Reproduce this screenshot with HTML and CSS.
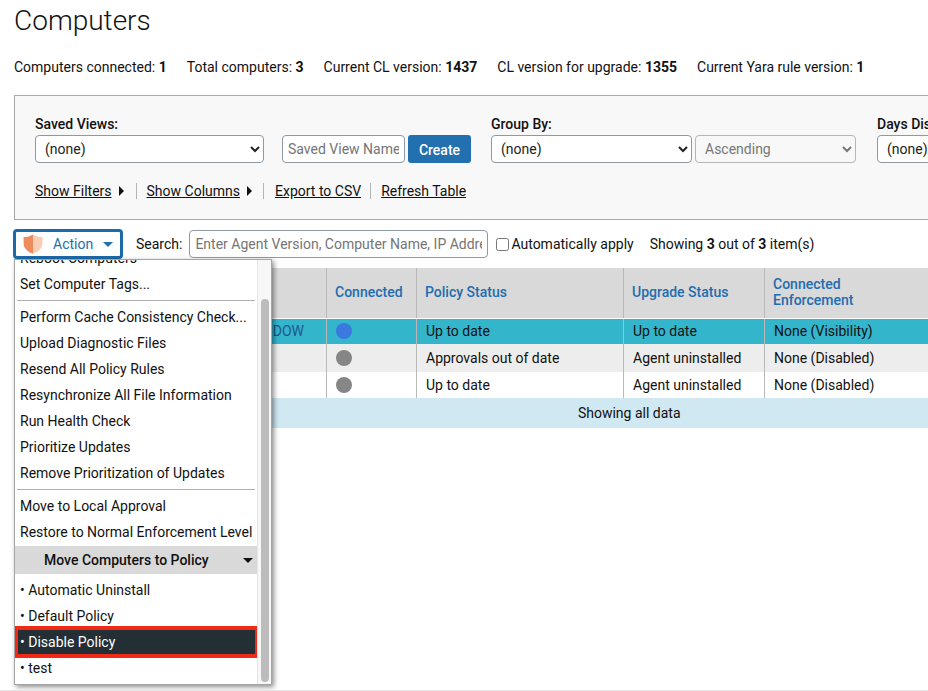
FILE: index.html
```html
<!DOCTYPE html>
<html lang="en">
<head>
<meta charset="utf-8">
<title>Computers</title>
<link rel="stylesheet" href="styles.css">
</head>
<body>
<div class="page">
  <h1 class="title">Computers</h1>
  <div class="stats">
    <span>Computers connected: <b>1</b></span>
    <span>Total computers: <b>3</b></span>
    <span>Current CL version: <b>1437</b></span>
    <span>CL version for upgrade: <b>1355</b></span>
    <span>Current Yara rule version: <b>1</b></span>
  </div>
  <section class="panel">
    <div class="fields">
      <div class="field">
        <label class="lbl">Saved Views:</label>
        <select class="ctl w-saved"><option>(none)</option></select>
      </div>
      <div class="field save-name">
        <div class="inline">
          <input class="ctl w-name" placeholder="Saved View Name">
          <button class="create">Create</button>
        </div>
      </div>
      <div class="field group-by">
        <label class="lbl">Group By:</label>
        <div class="inline">
          <select class="ctl w-group"><option>(none)</option></select>
          <select class="ctl w-order" disabled><option>Ascending</option></select>
        </div>
      </div>
      <div class="field days">
        <label class="lbl">Days Displayed:</label>
        <select class="ctl w-days"><option>(none)</option></select>
      </div>
    </div>
    <div class="links">
      <a>Show Filters</a><i class="tri"></i><span class="sep"></span>
      <a>Show Columns</a><i class="tri tri-b"></i><span class="sep sep-b"></span>
      <a>Export to CSV</a><span class="sep sep-c"></span>
      <a>Refresh Table</a>
    </div>
  </section>
  <div class="toolbar">
    <button class="action">
      <svg class="shield" viewBox="0 0 20 20" width="20" height="20" aria-hidden="true">
        <path d="M10 .4 C7.5 2 4 3 .6 3 V9.5 C.6 14.5 5 18 10 19.8 Z" fill="#ef8c5b"/>
        <path d="M10 .4 C12.5 2 16 3 19.4 3 V9.5 C19.4 14.5 15 18 10 19.8 Z" fill="#f9cdb6"/>
      </svg>
      <span>Action</span>
      <i class="caret"></i>
    </button>
    <label class="search-lbl">Search:</label>
    <input class="ctl w-search" placeholder="Enter Agent Version, Computer Name, IP Address">
    <label class="auto"><input type="checkbox" class="chk">Automatically apply</label>
    <span class="showing">Showing <b>3</b> out of <b>3</b> item(s)</span>
  </div>
  <table class="grid">
    <colgroup>
      <col class="c1"><col class="c2"><col class="c3"><col class="c4"><col class="c5"><col>
    </colgroup>
    <thead>
      <tr><th></th><th>Connected</th><th>Policy Status</th><th>Upgrade Status</th><th>Connected<br>Enforcement</th><th></th></tr>
    </thead>
    <tbody>
      <tr class="sel"><td class="name">WINDOW</td><td><i class="dot on"></i></td><td>Up to date</td><td>Up to date</td><td>None (Visibility)</td><td></td></tr>
      <tr class="alt"><td></td><td><i class="dot"></i></td><td>Approvals out of date</td><td>Agent uninstalled</td><td>None (Disabled)</td><td></td></tr>
      <tr class="plain"><td></td><td><i class="dot"></i></td><td>Up to date</td><td>Agent uninstalled</td><td>None (Disabled)</td><td></td></tr>
    </tbody>
    <tfoot>
      <tr><td colspan="6">Showing all data</td></tr>
    </tfoot>
  </table>
  <div class="menu">
    <div class="menu-list">
      <div class="item clipped">Reboot Computers</div>
      <div class="item">Set Computer Tags...</div>
      <hr>
      <div class="item">Perform Cache Consistency Check...</div>
      <div class="item">Upload Diagnostic Files</div>
      <div class="item">Resend All Policy Rules</div>
      <div class="item">Resynchronize All File Information</div>
      <div class="item">Run Health Check</div>
      <div class="item">Prioritize Updates</div>
      <div class="item">Remove Prioritization of Updates</div>
      <hr>
      <div class="item">Move to Local Approval</div>
      <div class="item">Restore to Normal Enforcement Level</div>
      <div class="sub-head"><span>Move Computers to Policy</span><i class="sub-caret"></i></div>
      <div class="sub-list">
        <div class="item">• Automatic Uninstall</div>
        <div class="item">• Default Policy</div>
        <div class="item picked">• Disable Policy</div>
        <div class="item">• test</div>
      </div>
    </div>
    <div class="scroll"><div class="thumb"></div></div>
  </div>
</div>
<div class="bottom-line"></div>
</body>
</html>
```
FILE: styles.css
```css
* { box-sizing: border-box; }
html, body { margin: 0; height: 691px; overflow: hidden; background: #fff; }
body { font-family: Roboto, "Liberation Sans", sans-serif; font-size: 14px; color: #111; line-height: 20px; }
.page { position: relative; padding-left: 14px; width: 1300px; }
.title { margin: 0; padding-top: 4px; font-size: 28px; line-height: 34px; font-weight: 300; color: #111; }
.stats { margin-top: 19px; height: 20px; display: flex; gap: 20px; }
.panel { margin-top: 18px; width: 1240px; height: 125px; background: #f8f8f8; border: 1px solid #a9a9a9; padding: 18px 20px 0; }
.fields { display: flex; align-items: flex-start; }
.field { display: flex; flex-direction: column; }
.lbl { font-weight: 500; height: 20px; line-height: 20px; margin-bottom: 1px; color: #111; }
.inline { display: flex; gap: 3px; }
.save-name { margin: 21px 0 0 18px; }
.group-by { margin-left: 20px; }
.days { margin-left: 21px; }
.ctl { height: 28px; border: 1px solid #8d9aa3; border-radius: 4px; background: #fff; font: 14px Roboto, sans-serif; color: #222; padding: 0 5px; outline: 0; }
.ctl::placeholder { color: #757575; opacity: 1; }
.ctl:disabled { color: #777; border-color: #b5b5b5; background: #f8f8f8; opacity: 1; }
.w-saved { width: 229px; }
.w-name { width: 123px; }
.w-group { width: 201px; }
.w-order { width: 161px; }
.w-days { width: 120px; }
.create { width: 63px; height: 28px; border: 0; border-radius: 3px; background: #2270b0; color: #fff; font: 500 14px Roboto, sans-serif; padding: 1px 0 0; }
.links { display: flex; align-items: center; margin-top: 18px; height: 20px; }
.links a { text-decoration: underline; color: #111; }
.tri { width: 0; height: 0; margin-left: 7px; border-left: 5px solid #111; border-top: 5px solid transparent; border-bottom: 5px solid transparent; }
.tri-b { margin-left: 7px; }
.sep { width: 1px; height: 16px; background: #b5b5b5; margin: 0 10px 0 12px; }
.sep-b { margin: 0 11px 0 11px; }
.sep-c { margin: 0 10px 0 9px; }
.toolbar { margin-top: 9px; height: 30px; display: flex; align-items: center; margin-left: -1px; }
.action { width: 110px; height: 30px; border: 3px solid #1d6aa8; border-radius: 4px; background: #fff; padding: 0 0 0 7px; display: flex; align-items: center; font: 14px Roboto, sans-serif; color: #2270b0; }
.shield { flex: none; }
.action span { margin-left: 10px; }
.caret { margin-left: 10px; width: 0; height: 0; border-top: 5px solid #2270b0; border-left: 5px solid transparent; border-right: 5px solid transparent; }
.search-lbl { margin-left: 13px; }
.w-search { width: 299px; margin-left: 7px; }
.auto { display: flex; align-items: center; margin-left: 7px; }
.chk { width: 13px; height: 13px; margin: 0 2px 0 1px; }
.showing { margin-left: 16px; }
.grid { margin-top: 9px; width: 1230px; table-layout: fixed; border-collapse: collapse; }
.c1 { width: 312px; }
.c2 { width: 90px; }
.c3 { width: 207px; }
.c4 { width: 141px; }
.c5 { width: 180px; }
.grid th { height: 50px; background: #d9d9d9; color: #1f6dae; font-weight: 500; text-align: left; line-height: 16px; padding: 0 8px 2px; border-left: 1px solid #b9b9b9; border-bottom: 1px solid #fff; }
.grid td { height: 26px; line-height: 20px; padding: 0 9px; border-left: 1px solid #b9b9b9; white-space: nowrap; }
.sel td { background: #33b5cc; }
.alt td { background: #ededed; height: 28px; }
.grid td.name { text-align: right; color: #22578f; padding-right: 22px; }
.grid tfoot td { height: 30px; background: #d0e8f2; border: 0; text-align: center; }
.dot { display: block; width: 16px; height: 16px; border-radius: 50%; background: #868686; }
.dot.on { background: #3b78e0; }
.menu { position: absolute; left: 14px; top: 259px; width: 258px; height: 426px; background: #fff; border: 1px solid #a5a5a5; box-shadow: 2px 2px 5px rgba(0,0,0,.45); display: flex; overflow: hidden; }
.menu-list { width: 242px; flex: none; margin-top: -15px; }
.item { height: 26px; line-height: 26px; padding-left: 5px; white-space: nowrap; color: #111; }
.menu hr { margin: 3px 2px; height: 1px; border: 0; background: #b0b0b0; }
.sub-head { height: 28px; background: #d9d9d9; margin-top: 1px; display: flex; align-items: center; font-weight: 500; padding: 0 4px 0 29px; justify-content: space-between; }
.sub-caret { width: 0; height: 0; border-top: 5px solid #111; border-left: 5px solid transparent; border-right: 5px solid transparent; }
.sub-list { padding-top: 3px; }
.picked { height: 24px; line-height: 24px; margin: 1px 2px 1px 3px; padding-left: 2px; background: #232e35; color: #fff; outline: 4px solid #f02a14; }
.scroll { flex: 1; background: #f7f7f7; border-left: 1px solid #e6e6e6; padding: 39px 2px 2px 3px; }
.thumb { height: 383px; width: 8px; border-radius: 4px; background: #bcbcbc; }
.bottom-line { position: absolute; left: 0; right: 0; top: 690px; height: 1px; background: #e4e4e4; }
```
